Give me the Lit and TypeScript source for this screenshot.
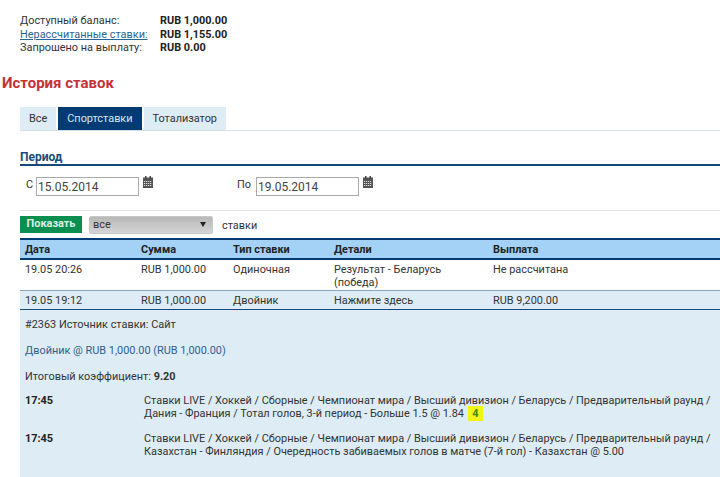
import { LitElement, html, css, svg } from "lit";
import { customElement } from "lit/decorators.js";

const calIcon = html`<svg class="cal" width="10" height="12" viewBox="0 0 10 12">
  <rect x="0" y="1.5" width="10" height="10.5" fill="#555"/>
  <rect x="2" y="0" width="1.5" height="2.5" fill="#444"/>
  <rect x="6.5" y="0" width="1.5" height="2.5" fill="#444"/>
  <g fill="#ddd">
    ${[5, 7, 9].map((y) => [1, 3, 5, 7].map((x) => svg`<rect x="${x}" y="${y}" width="1.2" height="1"/>`))}
  </g>
</svg>`;

@customElement("app-root")
export class AppRoot extends LitElement {
  static styles = css`
    :host {
      display: block;
      width: 720px;
      height: 477px;
      overflow: hidden;
      background: #fff;
      font-family: Roboto, "Liberation Sans", sans-serif;
      font-size: 10.9px;
      color: #333;
      box-sizing: border-box;
    }
    a { color: #2a6496; }
    .balance {
      display: grid;
      grid-template-columns: 140px auto;
      justify-content: start;
      padding: 14px 0 0 20px;
      line-height: 13.5px;
    }
    .balance b { color: #222; }
    h1 {
      margin: 19px 0 0 2px;
      font-size: 15px;
      line-height: 18px;
      font-weight: 700;
      color: #c23237;
    }
    .tabs {
      display: flex;
      gap: 2px;
      margin: 15px 0 0 20px;
      border-bottom: 1px solid #d5dfe8;
    }
    .tab {
      height: 23px;
      line-height: 24px;
      padding: 0 9px;
      background: #deecf5;
    }
    .tab.on { background: #003b74; color: #dbe7f2; }
    .period {
      margin: 19px 0 0 20px;
    }
    .period h2 {
      margin: 0;
      font-size: 12px;
      line-height: 14px;
      font-weight: 700;
      color: #1c4a7c;
      border-bottom: 2px solid #134a7a;
    }
    .dates {
      display: flex;
      align-items: flex-start;
      height: 45px;
      padding: 11px 0 0 6px;
      box-sizing: border-box;
      border-bottom: 1px solid #dfe5ea;
    }
    .dates label { line-height: 14px; padding-top: 1px; }
    .field {
      width: 100px;
      height: 17px;
      margin-left: 3px;
      border: 1px solid #aaa;
      font-size: 12px;
      line-height: 18px;
      padding-left: 1px;
      color: #444;
      background: #fff;
    }
    .cal { margin-left: 4px; margin-top: -1px; }
    .group1 { display: flex; width: 211px; }
    .group2 { display: flex; }
    .group2 .field { margin-left: 5px; }
    .actions {
      display: flex;
      align-items: flex-start;
      margin: 5px 0 0 20px;
      height: 22px;
    }
    .show {
      width: 62px;
      height: 17px;
      line-height: 16px;
      background: #0a8f50;
      color: #d9f0e4;
      font-weight: 700;
      text-align: center;
      box-sizing: border-box;
    }
    .select {
      display: flex;
      justify-content: space-between;
      align-items: center;
      width: 124px;
      height: 18px;
      margin-left: 7px;
      padding: 0 3px;
      box-sizing: border-box;
      background: linear-gradient(#b8b8b8, #d4d4d4);
      border-radius: 2px;
      border: 1px solid #c8c8c8;
    }
    .select i {
      width: 0;
      height: 0;
      border-left: 3px solid transparent;
      border-right: 3px solid transparent;
      border-top: 5px solid #222;
      margin-right: 3px;
    }
    .actions span.lbl { margin-left: 9px; line-height: 19px; }
    .tbl { margin-left: 20px; }
    .row {
      display: grid;
      grid-template-columns: 116px 92px 101px 159px 1fr;
      padding-left: 5px;
    }
    .head {
      height: 18px;
      line-height: 20px;
      background: #a3d2f6;
      border-top: 2px solid #003b74;
      border-bottom: 2px solid #003b74;
      font-weight: 700;
      color: #222;
    }
    .r1 {
      height: 30px;
      padding-top: 3px;
      box-sizing: border-box;
      line-height: 13.5px;
    }
    .r1 .details { max-width: 125px; }
    .r2 {
      height: 18px;
      line-height: 20px;
      background: #deecf5;
      border-top: 1px solid #8ba5bb;
      border-bottom: 1px solid #134a7a;
    }
    .panel {
      background: #deecf5;
      height: 170px;
      padding: 8px 5px 0;
      box-sizing: border-box;
      line-height: 14px;
    }
    .panel p { margin: 0 0 12px; }
    .panel p.last { margin-bottom: 8px; }
    .panel .blue { color: #2f5f92; }
    .leg {
      display: grid;
      grid-template-columns: 119px 1fr;
      line-height: 13px;
      margin-bottom: 10px;
      padding-top: 2px;
    }
    .leg b { color: #222; }
    .mark {
      background: #f4f414;
      color: #3c8c10;
      font-weight: 700;
      padding: 1px 4.5px;
      margin-left: 1px;
    }
  `;

  render() {
    return html`
      <div class="balance">
        <span>Доступный баланс:</span><b>RUB 1,000.00</b>
        <a href="#">Нерассчитанные ставки:</a><b>RUB 1,155.00</b>
        <span>Запрошено на выплату:</span><b>RUB 0.00</b>
      </div>
      <h1>История ставок</h1>
      <div class="tabs">
        <div class="tab">Все</div>
        <div class="tab on">Спортставки</div>
        <div class="tab">Тотализатор</div>
      </div>
      <div class="period">
        <h2>Период</h2>
        <div class="dates">
          <div class="group1">
            <label>С</label><div class="field">15.05.2014</div>${calIcon}
          </div>
          <div class="group2">
            <label>По</label><div class="field">19.05.2014</div>${calIcon}
          </div>
        </div>
      </div>
      <div class="actions">
        <div class="show">Показать</div>
        <div class="select"><span>все</span><i></i></div>
        <span class="lbl">ставки</span>
      </div>
      <div class="tbl">
        <div class="row head">
          <span>Дата</span><span>Сумма</span><span>Тип ставки</span><span>Детали</span><span>Выплата</span>
        </div>
        <div class="row r1">
          <span>19.05 20:26</span><span>RUB 1,000.00</span><span>Одиночная</span><span class="details">Результат - Беларусь (победа)</span><span>Не рассчитана</span>
        </div>
        <div class="row r2">
          <span>19.05 19:12</span><span>RUB 1,000.00</span><span>Двойник</span><span>Нажмите здесь</span><span>RUB 9,200.00</span>
        </div>
        <div class="panel">
          <p>#2363 Источник ставки: Сайт</p>
          <p class="blue">Двойник @ RUB 1,000.00 (RUB 1,000.00)</p>
          <p class="last">Итоговый коэффициент: <b>9.20</b></p>
          <div class="leg">
            <b>17:45</b>
            <span>Ставки LIVE / Хоккей / Сборные / Чемпионат мира / Высший дивизион / Беларусь / Предварительный раунд / Дания - Франция / Тотал голов, 3-й период - Больше 1.5 @ 1.84 <span class="mark">4</span></span>
          </div>
          <div class="leg">
            <b>17:45</b>
            <span>Ставки LIVE / Хоккей / Сборные / Чемпионат мира / Высший дивизион / Беларусь / Предварительный раунд / Казахстан - Финляндия / Очередность забиваемых голов в матче (7-й гол) - Казахстан @ 5.00</span>
          </div>
        </div>
      </div>
    `;
  }
}
